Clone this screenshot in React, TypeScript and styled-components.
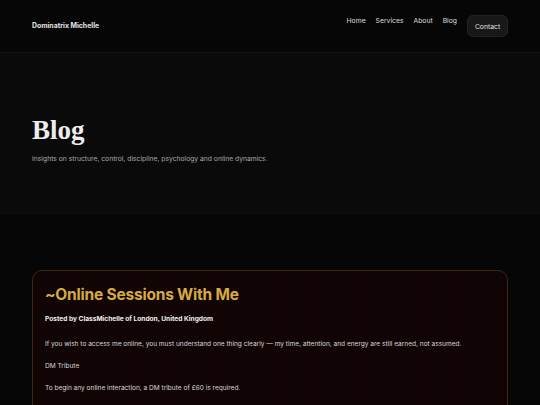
import React from 'react';
import styled, { createGlobalStyle } from 'styled-components';

const GlobalStyle = createGlobalStyle`
  html, body {
    margin: 0;
    padding: 0;
    background: #060606;
  }
  body {
    font-family: Inter, "Noto Sans", Arial, sans-serif;
    color: #e6e6e6;
    -webkit-font-smoothing: antialiased;
  }
  * {
    box-sizing: border-box;
  }
`;

const Page = styled.div`
  width: 540px;
  height: 405px;
  overflow: hidden;
  background: #060606;
`;

const Header = styled.header`
  height: 53px;
  display: flex;
  justify-content: space-between;
  align-items: flex-start;
  padding: 0 32px;
  border-bottom: 1px solid #141414;
  background: #060606;
`;

const Brand = styled.div`
  margin-top: 21px;
  font-size: 6.9px;
  font-weight: 700;
  color: #e4e4e4;
`;

const Nav = styled.nav`
  display: flex;
  align-items: flex-start;
  gap: 10px;
  padding-top: 15px;
`;

const NavLink = styled.a`
  margin-top: 1px;
  font-size: 6.8px;
  color: #dcdcdc;
  text-decoration: none;
`;

const ContactButton = styled.button`
  width: 41px;
  height: 22px;
  padding: 0;
  border-radius: 6px;
  border: 1px solid #232323;
  background: #181818;
  color: #e0e0e0;
  font-family: inherit;
  font-size: 6.8px;
`;

const Hero = styled.section`
  height: 162px;
  padding: 61px 32px 0;
  background: #0a0a0a;
`;

const Title = styled.h1`
  margin: 0;
  font-family: "Liberation Serif", "DejaVu Serif", serif;
  font-weight: 700;
  font-size: 27px;
  line-height: 32px;
  color: #ededed;
`;

const Lead = styled.p`
  margin: 8px 0 0;
  font-size: 6.75px;
  color: #a8a8a8;
`;

const Main = styled.main`
  padding: 55px 32px 0;
`;

const Card = styled.article`
  border: 1px solid #3a2815;
  border-radius: 10px;
  padding: 13px 12px 0;
  height: 200px;
  background-color: #100405;
  background-image: repeating-linear-gradient(
    90deg,
    rgba(255, 255, 255, 0) 0px,
    rgba(255, 255, 255, 0) 7px,
    rgba(60, 20, 20, 0.12) 8px,
    rgba(255, 255, 255, 0) 9px
  );
`;

const CardTitle = styled.h2`
  margin: 0;
  font-size: 15.5px;
  line-height: 22px;
  font-weight: 700;
  color: #d6ab40;
  letter-spacing: -0.2px;
`;

const Byline = styled.p`
  margin: 9px 0 0;
  font-size: 6.6px;
  font-weight: 700;
  color: #f0f0f0;
`;

const Para = styled.p`
  margin: 17px 0 0;
  font-size: 6.55px;
  line-height: 9px;
  color: #d8d8d8;
  white-space: nowrap;
`;

const SmallPara = styled(Para)`
  margin-top: 13px;
`;

const links = ['Home', 'Services', 'About', 'Blog'];

export default function App() {
  return (
    <>
      <GlobalStyle />
      <Page>
        <Header>
          <Brand>Dominatrix Michelle</Brand>
          <Nav>
            {links.map((l) => (
              <NavLink key={l} href="#">
                {l}
              </NavLink>
            ))}
            <ContactButton>Contact</ContactButton>
          </Nav>
        </Header>
        <Hero>
          <Title>Blog</Title>
          <Lead>Insights on structure, control, discipline, psychology and online dynamics.</Lead>
        </Hero>
        <Main>
          <Card>
            <CardTitle>~Online Sessions With Me</CardTitle>
            <Byline>Posted by ClassMichelle of London, United Kingdom</Byline>
            <Para>
              If you wish to access me online, you must understand one thing clearly — my time, attention, and energy are still earned, not assumed.
            </Para>
            <SmallPara>DM Tribute</SmallPara>
            <SmallPara>To begin any online interaction, a DM tribute of £60 is required.</SmallPara>
          </Card>
        </Main>
      </Page>
    </>
  );
}
